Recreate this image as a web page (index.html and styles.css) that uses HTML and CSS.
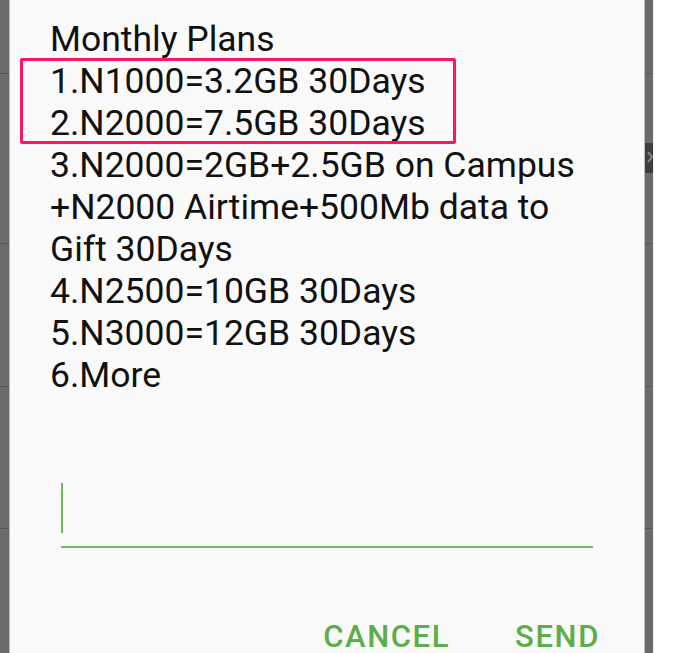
FILE: index.html
```html
<!DOCTYPE html>
<html>
<head>
<meta charset="utf-8">
<link rel="stylesheet" href="styles.css">
</head>
<body>
<div class="screen">
  <div class="side side-left">
    <div class="seg s1"></div>
    <div class="seg s2"></div>
    <div class="seg s3"></div>
    <div class="seg s4"></div>
    <div class="seg rest"></div>
  </div>
  <div class="dialog">
    <div class="message">
      <div>Monthly Plans</div>
      <div>1.N1000=3.2GB 30Days</div>
      <div>2.N2000=7.5GB 30Days</div>
      <div>3.N2000=2GB+2.5GB on Campus +N2000 Airtime+500Mb data to Gift 30Days</div>
      <div>4.N2500=10GB 30Days</div>
      <div>5.N3000=12GB 30Days</div>
      <div>6.More</div>
    </div>
    <div class="input">
      <span class="caret"></span>
    </div>
    <div class="actions">
      <span class="btn">CANCEL</span>
      <span class="btn">SEND</span>
    </div>
    <div class="highlight"></div>
  </div>
  <div class="side side-right">
    <div class="seg r1"></div>
    <div class="seg r2"></div>
    <div class="seg rblock">
      <svg width="8" height="30" viewBox="0 0 8 30"><polyline points="3,9 7,14 3,19" fill="none" stroke="#8a8a8a" stroke-width="2"/></svg>
    </div>
    <div class="seg r3"></div>
    <div class="seg r4"></div>
    <div class="seg r5"></div>
    <div class="seg rest"></div>
  </div>
  <div class="outside"></div>
</div>
</body>
</html>
```

FILE: styles.css
```css
html, body {
  margin: 0;
  padding: 0;
  background: #ffffff;
}
.screen {
  display: flex;
  width: 674px;
  height: 653px;
  overflow: hidden;
  font-family: Roboto, "Noto Sans", sans-serif;
}
.side {
  display: flex;
  flex-direction: column;
  width: 9px;
  flex: none;
  background: #6b6b6b;
}
.side-left {
  border-right: 1px solid #b9b9b9;
}
.side-right {
  border-left: 1px solid #bdbdbd;
  width: 8px;
}
.seg {
  flex: none;
  box-sizing: border-box;
}
.seg.rest { flex: 1; }
.s1 { height: 74px; border-bottom: 1px solid #575757; }
.s2 { height: 170px; border-bottom: 1px solid #575757; }
.s3 { height: 143px; border-bottom: 1px solid #575757; }
.s4 { height: 142px; border-bottom: 1px solid #575757; }
.r1 { height: 74px; border-bottom: 1px solid #575757; }
.r2 { height: 69px; }
.rblock { height: 30px; background: #3e3e3e; }
.rblock svg { display: block; }
.r3 { height: 71px; border-bottom: 1px solid #575757; }
.r4 { height: 143px; border-bottom: 1px solid #575757; }
.r5 { height: 142px; border-bottom: 1px solid #575757; }
.outside {
  flex: 1;
  background: #ffffff;
  border-left: 1px solid #fbeee6;
}
.dialog {
  position: relative;
  width: 634px;
  flex: none;
  background: #fafafa;
  box-sizing: border-box;
  padding: 18px 40px 0 40px;
}
.message {
  font-size: 35.5px;
  line-height: 42px;
  color: #111111;
  width: 554px;
}
.input {
  margin: 87px 11px 0 11px;
  height: 63px;
  border-bottom: 2px solid #6cbf5c;
}
.caret {
  display: block;
  width: 2px;
  height: 50px;
  background: #6cbf5c;
}
.actions {
  display: flex;
  justify-content: flex-end;
  gap: 65px;
  margin-top: 77px;
  margin-right: 4px;
}
.btn {
  font-size: 31px;
  line-height: 24px;
  font-weight: 500;
  letter-spacing: 1.6px;
  color: #5cae48;
}
.highlight {
  position: absolute;
  left: 10px;
  top: 58px;
  width: 436px;
  height: 86px;
  box-sizing: border-box;
  border: 3px solid #ff1660;
  border-radius: 2px;
}
```
